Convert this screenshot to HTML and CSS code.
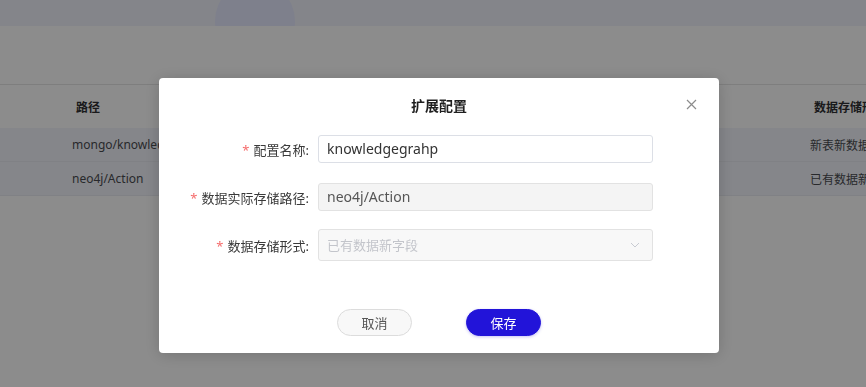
FILE: index.html
```html
<!DOCTYPE html>
<html lang="zh-CN">
<head>
    <meta charset="UTF-8">
    <meta name="viewport" content="width=device-width, initial-scale=1.0">
    <title>扩展配置</title>
    <link rel="stylesheet" href="styles.css">
</head>
<body>
    <!-- Page behind the dialog -->
    <header class="topbar">
        <span class="avatar"></span>
    </header>

    <div class="content">
        <div class="table">
            <div class="tr th">
                <div class="td"></div>
                <div class="td">路径</div>
                <div class="td"></div>
                <div class="td">数据存储形式</div>
            </div>
            <div class="tr">
                <div class="td"></div>
                <div class="td">mongo/knowledgegrahp</div>
                <div class="td"></div>
                <div class="td">新表新数据</div>
            </div>
            <div class="tr">
                <div class="td"></div>
                <div class="td">neo4j/Action</div>
                <div class="td"></div>
                <div class="td">已有数据新字段</div>
            </div>
        </div>
    </div>

    <!-- Dialog -->
    <div class="mask">
        <div class="dialog">
            <div class="dialog-header">
                <span class="dialog-title">扩展配置</span>
                <span class="dialog-close">
                    <svg width="11" height="11" viewBox="0 0 11 11">
                        <path d="M1 1 L10 10 M10 1 L1 10" stroke="#8c8c8c" stroke-width="1.2" fill="none"/>
                    </svg>
                </span>
            </div>

            <div class="dialog-body">
                <div class="form-item">
                    <label class="form-label"><i>*</i>配置名称:</label>
                    <div class="input">knowledgegrahp</div>
                </div>
                <div class="form-item">
                    <label class="form-label"><i>*</i>数据实际存储路径:</label>
                    <div class="input is-disabled">neo4j/Action</div>
                </div>
                <div class="form-item form-item-select">
                    <label class="form-label"><i>*</i>数据存储形式:</label>
                    <div class="input select">
                        <span class="placeholder">已有数据新字段</span>
                        <svg class="arrow" width="10" height="6" viewBox="0 0 10 6">
                            <path d="M1 1 L5 5 L9 1" stroke="#c8cbd2" stroke-width="1" fill="none"/>
                        </svg>
                    </div>
                </div>
            </div>

            <div class="dialog-footer">
                <button class="btn">取消</button>
                <button class="btn btn-primary">保存</button>
            </div>
        </div>
    </div>
</body>
</html>
```

FILE: styles.css
```css
/* General */
body {
    margin: 0;
    padding: 0;
    font-family: 'Noto Sans', 'Noto Sans CJK SC', sans-serif;
    background: #fff;
    color: #303133;
    overflow: hidden;
    height: 387px;
}

/* Top bar */
.topbar {
    height: 26px;
    background: #f0f2fb;
    position: relative;
    overflow: hidden;
}
.avatar {
    position: absolute;
    left: 215px;
    top: -19px;
    width: 80px;
    height: 80px;
    border-radius: 50%;
    background: #e6e9ff;
}

/* Table */
.content {
    padding-top: 58px;
}
.table {
    border-top: 1px solid #e6e6e6;
    font-size: 12px;
}
.tr {
    display: grid;
    grid-template-columns: 62px 360px 378px 66px;
    height: 33px;
    align-items: center;
    background: #f2f4fc;
    border-bottom: 1px solid #e9ebf2;
    color: #4a4c50;
}
.tr.th {
    height: 43px;
    background: #fff;
    border-bottom: none;
    color: #303133;
    font-weight: bold;
}
.td {
    padding: 0 10px;
    white-space: nowrap;
}
.th .td {
    padding-left: 14px;
}

/* Mask */
.mask {
    position: fixed;
    inset: 0;
    background: rgba(0, 0, 0, 0.45);
}

/* Dialog */
.dialog {
    position: relative;
    margin: 78px 0 0 159px;
    width: 560px;
    background: #fff;
    border-radius: 4px;
    box-shadow: 0 2px 16px rgba(0, 0, 0, 0.18);
}
.dialog-header {
    padding: 17px 20px 0;
    text-align: center;
    line-height: 20px;
}
.dialog-title {
    font-size: 14px;
    font-weight: bold;
    color: #1f1f1f;
}
.dialog-close {
    position: absolute;
    top: 21px;
    right: 22px;
    width: 11px;
    height: 11px;
    line-height: 0;
}

.dialog-body {
    padding-top: 19px;
}
.form-item {
    display: grid;
    grid-template-columns: 150px 335px;
    column-gap: 9px;
    align-items: center;
    margin-bottom: 20px;
}
.form-item:nth-child(2) {
    margin-bottom: 18px;
}
.form-item:last-child {
    margin-bottom: 0;
}
.form-label {
    text-align: right;
    font-size: 13px;
    color: #3a3a3a;
    white-space: nowrap;
}
.form-label i {
    font-style: normal;
    color: #f56c6c;
    margin-right: 4px;
}

.input {
    box-sizing: border-box;
    height: 28px;
    line-height: 26px;
    padding: 0 8px;
    border: 1px solid #dcdfe6;
    border-radius: 3px;
    font-size: 14px;
    color: #333;
}
.input.is-disabled {
    background: #f4f4f4;
    border-color: #e2e2e2;
    color: #555;
}
.input.select {
    height: 32px;
    line-height: 30px;
    background: #f8f8f8;
    border-color: #e2e2e2;
    display: flex;
    justify-content: space-between;
    align-items: center;
}
.placeholder {
    font-size: 13px;
    color: #c3c5cb;
}
.arrow {
    margin-right: 4px;
}

/* Footer */
.dialog-footer {
    display: flex;
    justify-content: center;
    gap: 54px;
    padding: 48px 0 17px;
}
.btn {
    width: 75px;
    height: 27px;
    border: 1px solid #dcdcdc;
    border-radius: 14px;
    background: #f8f8f8;
    color: #555;
    font-family: inherit;
    font-size: 13px;
    padding: 0;
    cursor: pointer;
}
.btn-primary {
    background: #2214d9;
    border-color: #2214d9;
    color: #fff;
    box-shadow: 0 1px 3px rgba(34, 20, 217, 0.25);
}
```
